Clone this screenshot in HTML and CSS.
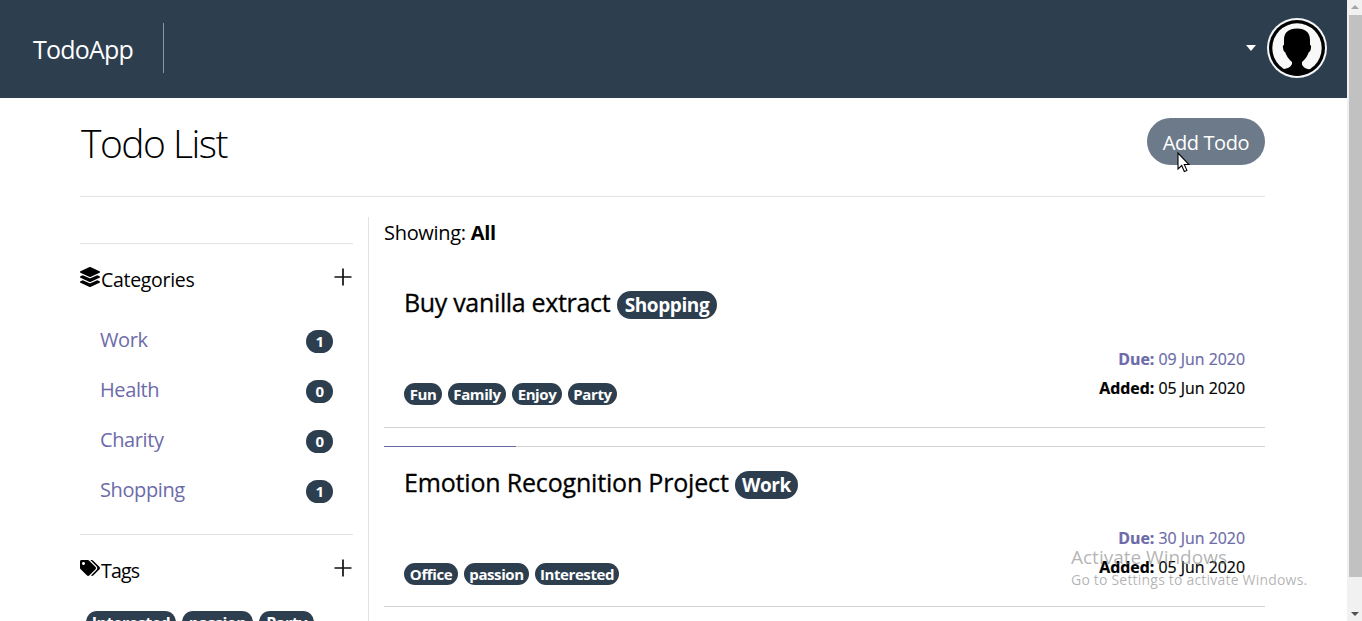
FILE: index.html
```html
<!DOCTYPE html>
<html lang="en">
<head>
<meta charset="utf-8">
<title>TodoApp</title>
<link rel="stylesheet" href="styles.css">
</head>
<body>
<div class="window">
  <div class="page">
    <header class="navbar">
      <a class="brand">TodoApp</a>
      <div class="nav-user">
        <span class="caret"></span>
        <svg class="avatar" width="60" height="60" viewBox="0 0 60 60">
          <circle cx="30" cy="30" r="30" fill="#f4f6f8"/>
          <circle cx="30" cy="30" r="28" fill="#000"/>
          <circle cx="30" cy="30" r="24.7" fill="#f8f8f8"/>
          <path fill="#000" d="M30 10.500c-8.500 0-13 4-13 11.500v5c-1.300 0-1.300 1.500-.9 3.500.4 2 .9 3.500 2 3.500 1 3.500 3.500 7 6.900 10v2c-1 3-5 5-10.500 5.500C19 56 25 57.500 30 57.500s11-1.500 15.500-5.500c-5.500-.5-9.500-2.500-10.500-5.500v-2.500c3.400-3 5.900-6.500 6.900-10 1.100 0 1.600-1.500 2-3.500.4-2 .4-3.500-.9-3.500v-5c0-7.500-4.500-11.500-13-11.500z"/>
        </svg>
      </div>
    </header>
    <div class="container">
      <div class="heading">
        <h1 class="title">Todo List</h1>
        <button class="add-btn">Add Todo</button>
      </div>
      <div class="columns">
        <aside class="sidebar">
          <section class="panel categories">
            <div class="panel-head">
              <svg class="icon" width="20" height="20" viewBox="0 0 512 512"><path d="M12.410 148.020l232.940 105.670c6.800 3.090 14.490 3.090 21.290 0l232.940-105.670c16.550-7.510 16.550-32.520 0-40.030L266.650 2.310a25.607 25.607 0 0 0-21.290 0L12.410 107.980c-16.550 7.510-16.550 32.530 0 40.040zm487.180 88.280l-58.090-26.330-161.640 73.270c-7.560 3.430-15.590 5.170-23.860 5.170s-16.290-1.740-23.860-5.170L70.510 209.970l-58.100 26.330c-16.550 7.500-16.550 32.500 0 40l232.940 105.590c6.800 3.080 14.490 3.080 21.290 0L499.590 276.300c16.550-7.500 16.550-32.500 0-40zm0 127.800l-57.870-26.230-161.860 73.370c-7.560 3.430-15.590 5.170-23.860 5.170s-16.290-1.740-23.860-5.170L70.290 337.870 12.410 364.100c-16.550 7.500-16.550 32.500 0 40l232.940 105.590c6.800 3.080 14.490 3.080 21.290 0L499.590 404.100c16.550-7.500 16.550-32.500 0-40z"/></svg>
              <span class="panel-name">Categories</span>
              <svg class="plus" width="18" height="18" viewBox="0 0 18 18"><path d="M9 .5v17M.5 9h17" stroke="#111" stroke-width="1.700"/></svg>
            </div>
            <ul class="cat-list">
              <li><a>Work</a><span class="count">1</span></li>
              <li><a>Health</a><span class="count">0</span></li>
              <li><a>Charity</a><span class="count">0</span></li>
              <li><a>Shopping</a><span class="count">1</span></li>
            </ul>
          </section>
          <section class="panel tags">
            <div class="panel-head">
              <svg class="icon" width="20" height="16" viewBox="0 0 640 512"><path d="M497.941 225.941L286.059 14.059A48 48 0 0 0 252.118 0H48C21.490 0 0 21.490 0 48v204.118a48 48 0 0 0 14.059 33.941l211.882 211.882c18.744 18.745 49.136 18.746 67.882 0l204.118-204.118c18.745-18.745 18.745-49.137 0-67.882zM112 160c-26.510 0-48-21.490-48-48s21.490-48 48-48 48 21.490 48 48-21.490 48-48 48zm513.941 133.823L421.823 497.941c-18.745 18.745-49.137 18.745-67.882 0l-.36-.36L527.640 323.522c16.999-16.999 26.360-39.600 26.360-63.640s-9.362-46.641-26.360-63.640L331.397 0h48.721a48 48 0 0 1 33.941 14.059l211.882 211.882c18.745 18.745 18.745 49.137 0 67.882z"/></svg>
              <span class="panel-name">Tags</span>
              <svg class="plus" width="18" height="18" viewBox="0 0 18 18"><path d="M9 .5v17M.5 9h17" stroke="#111" stroke-width="1.700"/></svg>
            </div>
            <div class="tag-cloud">
              <span class="badge w90">Interested</span><span class="badge w71">passion</span><span class="badge w55">Party</span>
            </div>
          </section>
        </aside>
        <main class="main">
          <p class="showing">Showing: <b>All</b></p>
          <article class="todo">
            <h2 class="todo-title"><span class="t-one">Buy vanilla extract</span><span class="badge big w100">Shopping</span></h2>
            <p class="date due"><b>Due:</b> 09 Jun 2020</p>
            <div class="todo-foot">
              <div class="tag-row"><span class="badge w38">Fun</span><span class="badge w58">Family</span><span class="badge w50">Enjoy</span><span class="badge w49">Party</span></div>
              <p class="date"><b>Added:</b> 05 Jun 2020</p>
            </div>
          </article>
          <div class="progress"><div class="progress-bar"></div></div>
          <article class="todo second">
            <h2 class="todo-title"><span class="t-two">Emotion Recognition Project</span><span class="badge big w63">Work</span></h2>
            <p class="date due"><b>Due:</b> 30 Jun 2020</p>
            <div class="todo-foot">
              <div class="tag-row"><span class="badge w54">Office</span><span class="badge w65">passion</span><span class="badge w84">Interested</span></div>
              <p class="date"><b>Added:</b> 05 Jun 2020</p>
            </div>
          </article>
        </main>
      </div>
    </div>
  </div>
  <div class="scrollbar">
    <span class="arrow up"></span>
    <span class="thumb"></span>
    <span class="arrow down"></span>
  </div>
  <div class="watermark"><div class="wm-title">Activate Windows</div><div class="wm-sub">Go to Settings to activate Windows.</div></div>
  <svg class="cursor" width="13" height="21" viewBox="0 0 13 21"><path d="M1 1v16l3.700-3.500 2.600 6 2.600-1.100-2.600-5.900H12z" fill="#fff" stroke="#000" stroke-width="1.100"/></svg>
</div>
</body>
</html>
```
FILE: styles.css
```css
* { box-sizing: border-box; }
body { margin: 0; font-family: "Open Sans", "Noto Sans", sans-serif; font-size: 20px; line-height: 30px; color: #000; background: #fff; }
h1, h2, p, ul { margin: 0; padding: 0; font-weight: 400; }
ul { list-style: none; }
svg { display: block; flex: none; }
.window { position: relative; display: flex; width: 1362px; height: 621px; overflow: hidden; }
.page { flex: 1; height: 621px; overflow: hidden; }
.navbar { display: flex; justify-content: space-between; height: 98px; padding: 18px 20px 20px 33px; background: #2d3e4f; }
.brand { width: 131px; height: 50px; margin-top: 5px; border-right: 1px solid #8997a3; color: #fff; font-size: 25px; line-height: 53px; letter-spacing: -.8px; white-space: nowrap; }
.nav-user { display: flex; align-items: center; gap: 11px; height: 60px; }
.caret { border: 5.500px solid transparent; border-top: 6px solid #fff; border-bottom: 0; }
.container { padding: 20px 82px 0 80px; }
.heading { display: flex; justify-content: space-between; height: 79px; border-bottom: 1px solid #e2e2e2; }
.title { padding-left: 1px; font-size: 39px; font-weight: 300; line-height: 49px; letter-spacing: -1.5px; color: #000; }
.add-btn { width: 118px; height: 47px; padding: 2px 0 0; border: 0; border-radius: 24px; background: #6c7a89; color: #fff; font: 400 20px "Open Sans", sans-serif; letter-spacing: -.4px; white-space: nowrap; }
.columns { display: flex; margin-top: 20px; }
.sidebar { width: 289px; height: 420px; padding: 26px 15px 0 0; border-right: 1px solid #e2e2e2; }
.panel { border-top: 1px solid #e2e2e2; }
.categories { height: 291px; }
.panel-head { display: flex; padding: 21px 1px 0 0; height: 71px; }
.panel-head .icon { margin-top: 2px; }
.tags .panel-head .icon { margin-top: 4px; }
.panel-name { flex: 1; margin-left: 1px; line-height: 30px; font-size: 19.500px; letter-spacing: -.3px; }
.tags .panel-name { letter-spacing: -.8px; }
.plus { margin-top: 3px; }
.cat-list li { display: flex; justify-content: space-between; align-items: center; height: 50px; padding: 0 20px; color: #6c6ba8; letter-spacing: -.4px; }
.count { width: 27px; height: 23px; margin-top: 2px; border-radius: 12px; background: #2d3e4f; color: #fff; font-size: 15px; font-weight: 700; line-height: 23px; text-align: center; }
.tag-cloud { display: flex; gap: 6px; padding: 5px 6px 0; }
.badge { flex: none; height: 22px; border-radius: 11px; background: #2d3e4f; color: #fff; font-size: 15px; font-weight: 700; line-height: 23px; text-align: center; letter-spacing: -.4px; white-space: nowrap; }
.tag-cloud .badge { height: 24px; font-size: 16px; line-height: 24px; letter-spacing: -.5px; }
.big { height: 28px; border-radius: 14px; font-size: 19px; line-height: 29px; }
.w38 { width: 38px; } .w49 { width: 49px; } .w50 { width: 50px; } .w54 { width: 54px; } .w55 { width: 55px; }
.w58 { width: 58px; } .w63 { width: 63px; } .w65 { width: 65px; } .w71 { width: 71px; } .w84 { width: 84px; }
.w90 { width: 90px; } .w100 { width: 100px; }
.main { width: 881px; margin-left: 15px; }
.showing { height: 50px; line-height: 32px; letter-spacing: -.3px; }
.todo { height: 161px; padding: 21px 20px 0; border-bottom: 1px solid #d2d2d2; }
.todo-title { display: flex; gap: 7px; height: 57px; font-size: 25px; line-height: 29px; white-space: nowrap; -webkit-text-stroke: .3px currentColor; }
.todo-title .badge { margin-top: 3px; -webkit-text-stroke: 0; }
.t-one { width: 206px; letter-spacing: -.33px; }
.t-two { width: 324px; letter-spacing: -.18px; }
.date { font-size: 15.900px; line-height: 29px; text-align: right; white-space: nowrap; -webkit-text-stroke: .2px currentColor; }
.due { color: #6c6ba8; }
.todo-foot { display: flex; justify-content: space-between; }
.tag-row { display: flex; gap: 6px; padding-top: 9px; }
.progress { height: 1px; margin-top: 18px; background: #d2d2d2; }
.progress-bar { width: 132px; height: 1px; background: #6c6ba8; }
.second { height: 160px; }
.second .todo-title { height: 56px; }
.second .tag-row { padding-top: 10px; }
.scrollbar { display: flex; flex-direction: column; width: 15px; height: 621px; padding: 5px 0 5px 2px; background: #f1f1f1; }
.thumb { height: 562px; margin-top: 6px; background: #c1c1c1; }
.arrow { width: 8px; margin-left: 2px; border: 4px solid transparent; }
.up { border-top: 0; border-bottom-color: #a3a3a3; }
.down { margin-top: auto; border-bottom: 0; border-top-color: #505050; }
.watermark { position: absolute; left: 1071px; top: 545px; color: rgba(130, 130, 130, .6); white-space: nowrap; }
.wm-title { font-size: 19px; line-height: 25px; }
.wm-sub { font-size: 14px; line-height: 20px; letter-spacing: .2px; }
.cursor { position: absolute; left: 1177px; top: 152px; }
```
